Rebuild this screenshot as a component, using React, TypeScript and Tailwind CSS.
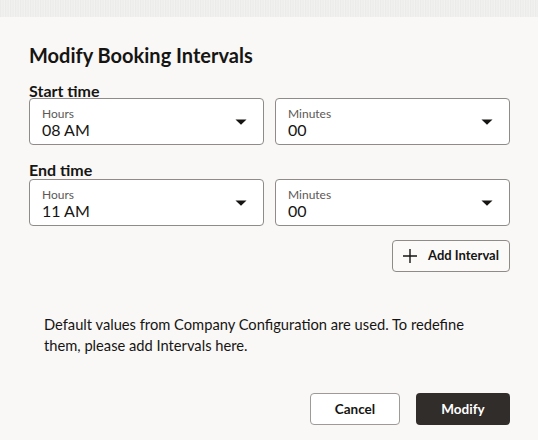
import React from "react";

const font = { fontFamily: "Lato, 'Noto Sans', sans-serif" };

function Caret() {
  return (
    <svg width="12" height="6" viewBox="0 0 12 6" className="shrink-0">
      <path d="M0.5 0.5 L11.5 0.5 L6 5.8 Z" fill="#161513" />
    </svg>
  );
}

function Select({ label, value }: { label: string; value: string }) {
  return (
    <div className="flex-1 h-[47px] bg-white border border-[#8f8b88] rounded-[4px] flex items-center pl-[12px] pr-[16px]">
      <div className="flex-1 flex flex-col pt-[1px]">
        <span className="text-[12px] leading-[14px] text-[#5c5855]">{label}</span>
        <span className="text-[16px] leading-[17px] text-[#161513]">{value}</span>
      </div>
      <Caret />
    </div>
  );
}

export default function App() {
  return (
    <div className="min-h-screen bg-[#f9f8f6] text-[#161513]" style={font}>
      <div className="h-[17px] bg-[#ececeb] bg-[repeating-linear-gradient(90deg,#e9e9e8_0px,#f2f2f1_2px,#ebebea_3px,#f4f4f3_5px)]" />
      <div className="pl-[29px] pr-[28px]">
        <h1 className="mt-[24px] text-[20px] leading-[28px] font-bold">Modify Booking Intervals</h1>

        <div className="mt-[14px] text-[16px] leading-[15px] font-bold">Start time</div>
        <div className="flex gap-[11px]">
          <Select label="Hours" value="08 AM" />
          <Select label="Minutes" value="00" />
        </div>

        <div className="mt-[17px] text-[16px] leading-[16px] font-bold">End time</div>
        <div className="mt-[1px] flex gap-[11px]">
          <Select label="Hours" value="11 AM" />
          <Select label="Minutes" value="00" />
        </div>

        <div className="mt-[14px] flex justify-end">
          <button className="h-[32px] w-[118px] border border-[#8f8b88] rounded-[4px] bg-[#fbfaf9] flex items-center pl-[9px] gap-[10px] text-[13px] font-bold text-[#161513]">
            <svg width="16" height="16" viewBox="0 0 16 16">
              <path d="M8 1 V15 M1 8 H15" stroke="#161513" strokeWidth="1.4" />
            </svg>
            Add Interval
          </button>
        </div>

        <p className="mt-[42px] pl-[15px] text-[14.7px] leading-[21px] text-[#161513]">
          Default values from Company Configuration are used. To redefine
          <br />
          them, please add Intervals here.
        </p>

        <div className="mt-[37px] flex justify-end gap-[16px]">
          <button className="h-[32px] w-[90px] border border-[#9e9a97] rounded-[4px] bg-white text-[13.5px] font-bold text-[#161513]">
            Cancel
          </button>
          <button className="h-[32px] w-[94px] rounded-[4px] bg-[#312d2a] text-[13.5px] font-bold text-white">
            Modify
          </button>
        </div>
      </div>
    </div>
  );
}
